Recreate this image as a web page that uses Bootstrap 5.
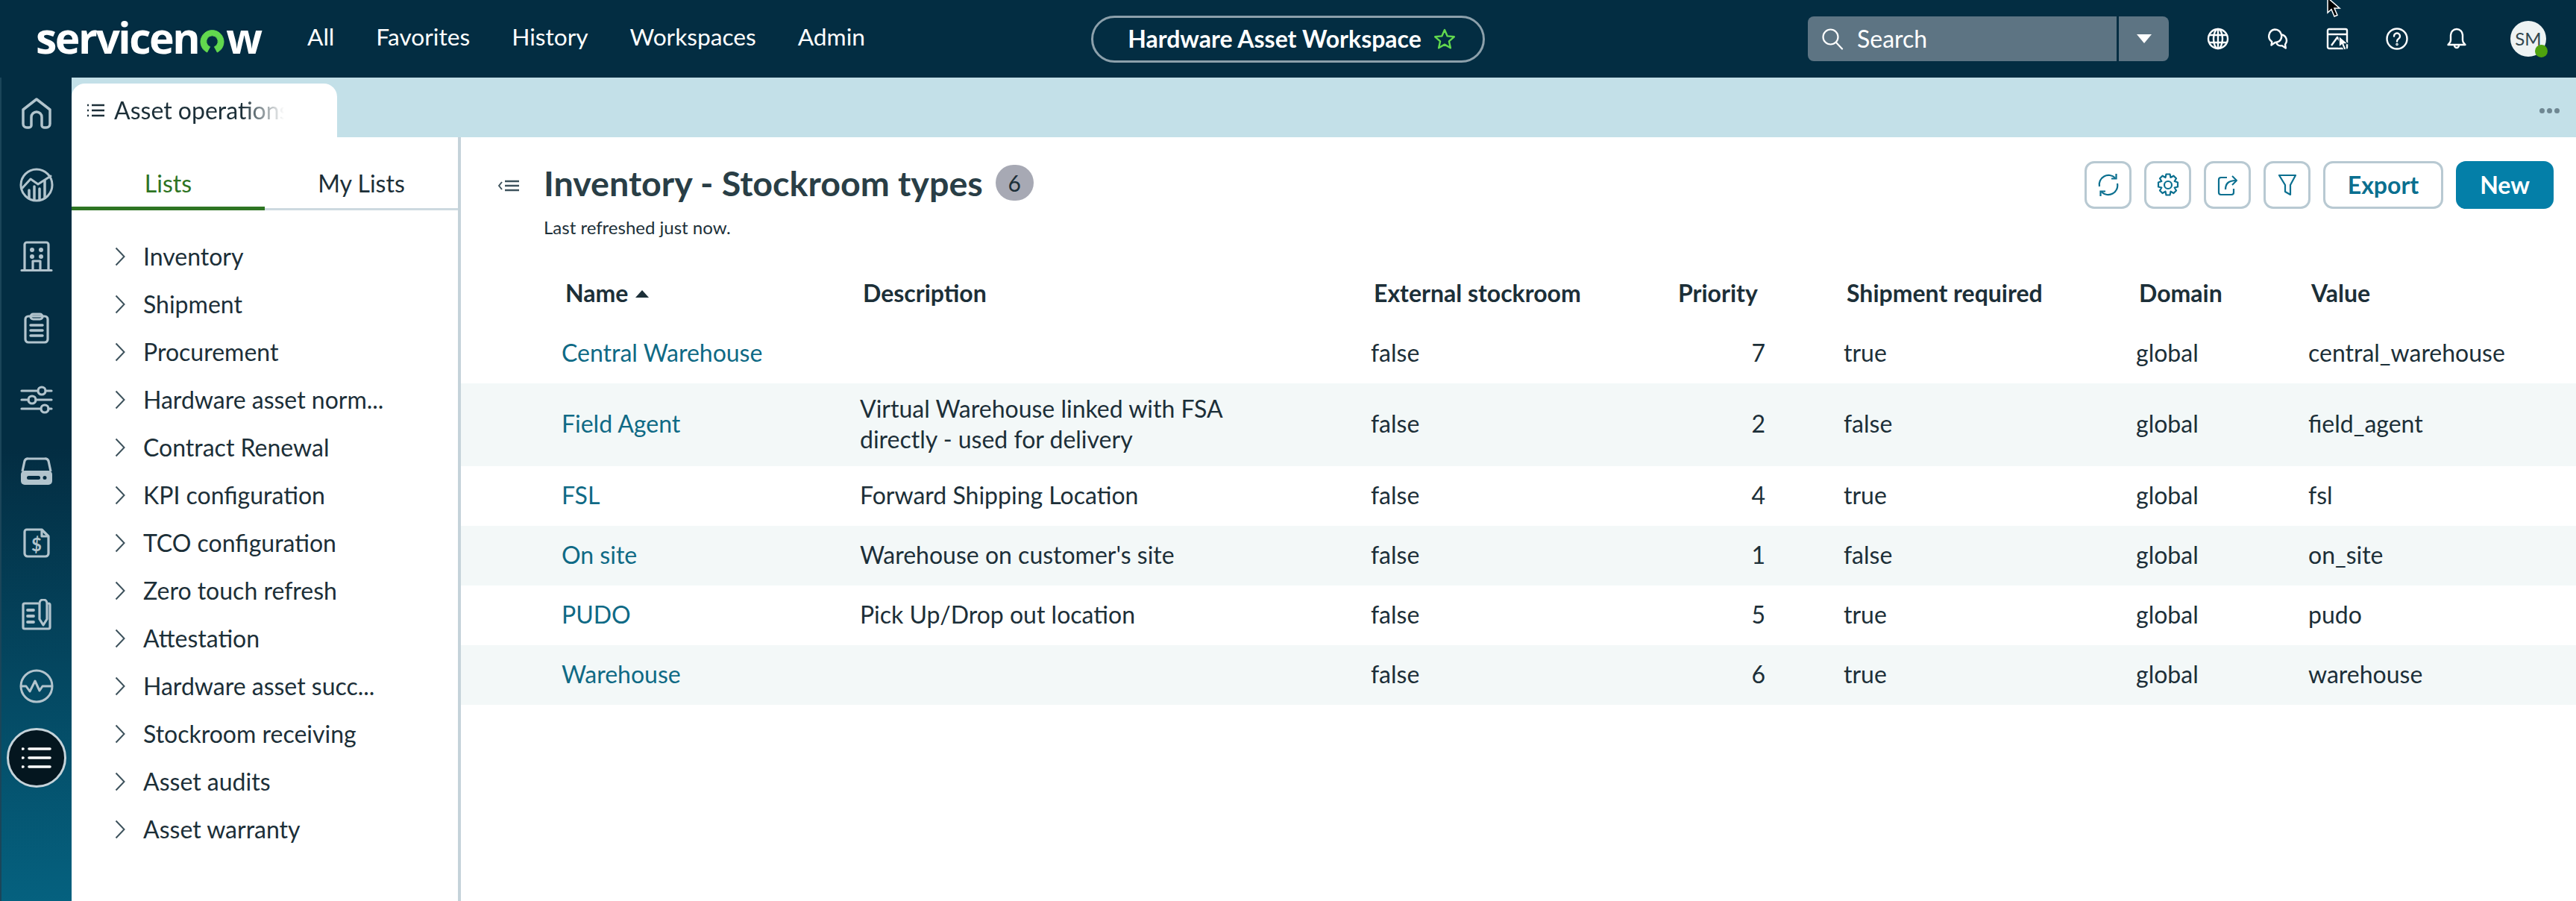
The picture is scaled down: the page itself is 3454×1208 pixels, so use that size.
<!DOCTYPE html>
<html lang="en">
<head>
  <meta charset="UTF-8" />
  <title>Inventory - Stockroom types</title>
  <link href="https://cdn.jsdelivr.net/npm/bootstrap@5.3.0/dist/css/bootstrap.min.css" rel="stylesheet" />
  <style>
    html, body { height: 100%; }
    body { font-family: "Lato", "Liberation Sans", sans-serif; font-size: 32px; color: #1c2f38; overflow: hidden; background: #fff; }
    svg { display: block; flex: none; }

    .sn-top { height: 104px; background: #032d42; padding: 0 44px; flex-wrap: nowrap; justify-content: flex-start; position: relative; }
    .sn-top-side { flex: 1 1 0; min-width: 0; }
    .sn-brand { font-family: "Open Sans", "Lato", sans-serif; font-weight: 700; font-size: 57px; line-height: 1; color: #fff; letter-spacing: -2.5px; width: 296px; margin: -4px 68px 0 4px; padding: 0; }
    .sn-brand svg { margin: 0 1px 0 1px; }
    .sn-menu { gap: 56px; margin-top: -4px; }
    .sn-menu .nav-link { color: #fff; padding: 0; font-size: 31.7px; }
    .sn-pill { width: 528px; height: 63px; border: 3px solid #8ca0ab; border-radius: 32px; color: #fff; font-weight: 700; font-size: 32px; gap: 16px; flex: none; padding-left: 10px; }
    .sn-search { width: 484px; height: 60px; background: #5d7483; border-radius: 8px; color: #fff; margin-right: 26px; }
    .sn-search-main { flex: 1; gap: 18px; padding-left: 18px; border-right: 3px solid #032d42; height: 100%; }
    .sn-search-caret { width: 67px; height: 100%; }
    .sn-caret { width: 0; height: 0; border-left: 10px solid transparent; border-right: 10px solid transparent; border-top: 12px solid #fff; }
    .sn-top-btn { width: 80px; }
    .sn-avatar { width: 48px; height: 48px; border-radius: 50%; background: #eef3f3; color: #32474f; font-size: 24px; margin: 0 -4px 0 32px; position: relative; flex: none; }
    .sn-avatar-dot { position: absolute; right: -2px; bottom: -1px; width: 17px; height: 17px; border-radius: 50%; background: #4fa30e; }
    .sn-cursor { position: absolute; left: 3118px; top: -3px; }
    .sn-cursor-small { position: absolute; left: 3134px; top: 46px; }

    .sn-rail { width: 96px; flex: none; background: linear-gradient(180deg, #032d42 45%, #05617f 100%); border-left: 2px solid #1b4559; }
    .sn-rail-slot { height: 96px; }
    .sn-rail-active { width: 80px; height: 80px; border-radius: 50%; background: #04161f; border: 3px solid #c5d3da; }

    .sn-strip { height: 80px; background: #c3e0e8; flex: none; }
    .sn-tab { width: 356px; height: 72px; margin-top: 8px; background: #fff; border-radius: 18px 18px 0 0; padding: 0 0 0 21px; gap: 12px; font-size: 32px; color: #1c2f38; }
    .sn-tab-text { width: 228px; overflow: hidden; white-space: nowrap; -webkit-mask-image: linear-gradient(90deg, #000 75%, transparent 100%); mask-image: linear-gradient(90deg, #000 75%, transparent 100%); }
    .sn-strip-dots { gap: 3px; padding: 8px 22px 0 0; }
    .sn-strip-dots span { width: 7px; height: 7px; border-radius: 50%; background: #6f8792; }

    .sn-left { width: 522px; flex: none; border-right: 4px solid #c5d3da; }
    .sn-tabs { border-bottom: 3px solid #cdd9e0; height: 98px; flex-wrap: nowrap; }
    .sn-tabs .nav-item { flex: 1 1 0; }
    .sn-tabs .nav-link { width: 100%; height: 98px; border: 0; border-radius: 0; padding: 43px 0 0; text-align: center; color: #1c2f38; background: none; margin: 0; font-size: 32px; line-height: 1.2; }
    .sn-tabs .nav-link.active { color: #2e7423; border-bottom: 5px solid #2e7423; margin-bottom: -3px; height: 98px; }
    .sn-tree { padding-top: 30px; }
    .sn-tree .list-group-item { height: 64px; border: 0; padding: 0 0 0 58px; gap: 24px; background: none; color: #1c2f38; font-size: 32px; }

    .sn-head { height: 170px; flex: none; padding: 32px 30px 0 50px; }
    .sn-title { font-size: 46.6px; font-weight: 700; color: #293e46; line-height: 58px; margin: 0 0 0 9px; }
    .sn-count { width: 51px; height: 48px; border-radius: 24px; background: #a7a9b4; color: #1c2f38; font-size: 30px; font-weight: 400; padding: 0; margin-left: 17px; }
    .sn-sub { font-size: 24px; line-height: 30px; margin: 16px 0 0 61px; }
    .sn-btns { gap: 17px; }
    .sn-btn { height: 64px; border: 3px solid #b8c9d2; border-radius: 13px; color: #0a6f8f; background: #fff; font-weight: 700; font-size: 32px; padding: 0; }
    .sn-btn-icon { width: 63px; }
    .sn-btn-export { width: 161px; }
    .sn-btn-new { width: 131px; background: #047fa8; border-color: #047fa8; color: #fff; }

    .sn-table { table-layout: fixed; width: 2836px; margin: 0; --bs-table-color: #1c2f38; --bs-table-border-color: transparent; --bs-table-bg: transparent; }
    .sn-table th { height: 80px; padding: 0 0 3px 30px; font-weight: 700; font-size: 32px; border: 0; vertical-align: middle; color: #1c2f38; }
    .sn-table td { height: 80px; padding: 12.5px 0 16.5px 26px; line-height: 41px; border: 0; vertical-align: middle; }
    .sn-table tbody tr:nth-child(even) td { background: #f3f8f8; }
    .sn-table td.sn-name-col { padding-left: 135px; }
    .sn-table th.sn-name-col { padding-left: 140px; }
    .sn-table th.sn-prio { padding-left: 26px; }
    .sn-table td.sn-num { text-align: right; padding-right: 79px; }
    .sn-table a { color: #0f6a85; text-decoration: none; }
    .sn-desc { max-width: 520px; }
    .sn-sort { display: inline-block; width: 0; height: 0; border-left: 9px solid transparent; border-right: 9px solid transparent; border-bottom: 10px solid #1c2f38; margin-left: 10px; vertical-align: 6px; }
  </style>
</head>
<body>
<div class="d-flex flex-column vh-100">

  <nav class="navbar sn-top align-items-center">
    <div class="sn-top-side d-flex align-items-center">
      <a class="navbar-brand sn-brand d-flex align-items-baseline" href="#">servicen<svg width="35" height="33" viewBox="0 0 36 34"><path d="M11 32A16 16 0 1 1 25 32L21 24.500A8 8 0 1 0 15 24.500Z" fill="#62d84e" stroke="#62d84e" stroke-linejoin="round"/></svg>w</a>
      <ul class="nav sn-menu">
        <li class="nav-item"><a class="nav-link" href="#">All</a></li>
        <li class="nav-item"><a class="nav-link" href="#">Favorites</a></li>
        <li class="nav-item"><a class="nav-link" href="#">History</a></li>
        <li class="nav-item"><a class="nav-link" href="#">Workspaces</a></li>
        <li class="nav-item"><a class="nav-link" href="#">Admin</a></li>
      </ul>
    </div>

    <div class="sn-pill d-flex align-items-center justify-content-center">
      <span>Hardware Asset Workspace</span>
      <svg width="30" height="28" viewBox="0 0 30 28" fill="none" stroke="#62d84e" stroke-width="2.4" stroke-linejoin="round"><path d="M15 2l3.7 8.4 9.1.9-6.9 6 2 9-7.9-4.7-7.9 4.7 2-9-6.9-6 9.1-.9z"/></svg>
    </div>

    <div class="sn-top-side d-flex align-items-center justify-content-end">
      <div class="sn-search d-flex align-items-center">
        <div class="sn-search-main d-flex align-items-center">
          <svg width="30" height="30" viewBox="0 0 30 30" fill="none" stroke="#fff" stroke-width="2.2" stroke-linecap="round"><circle cx="12.5" cy="12.5" r="10"/><path d="M20 20l8 8.5"/></svg>
          <span>Search</span>
        </div>
        <div class="sn-search-caret d-flex align-items-center justify-content-center"><span class="sn-caret"></span></div>
      </div>

      <div class="sn-top-btn d-flex justify-content-center">
        <svg width="30" height="30" viewBox="0 0 30 30" fill="none" stroke="#fff" stroke-width="2.4"><circle cx="15" cy="15" r="13"/><ellipse cx="15" cy="15" rx="6" ry="13"/><path d="M3 10h24M3 20h24M15 2v26"/></svg>
      </div>
      <div class="sn-top-btn d-flex justify-content-center">
        <svg width="30" height="30" viewBox="0 0 30 30" fill="none" stroke="#fff" stroke-width="2.4" stroke-linejoin="round"><path d="M11 2.5a9 9 0 0 1 6 15.8c-1.600 1.100-3.500 1.700-5.500 1.700l-5 3.500.8-4.600A9 9 0 0 1 11 2.500z"/><path d="M20.500 9.500a8 8 0 0 1 4.500 13l.8 5-5-3.200c-3 .4-6-.8-7.500-3.300"/></svg>
      </div>
      <div class="sn-top-btn d-flex justify-content-center">
        <svg width="30" height="30" viewBox="0 0 30 30" fill="none" stroke="#fff" stroke-width="2.4" stroke-linejoin="round"><rect x="2" y="2" width="26" height="26" rx="2"/><path d="M2 9h26M7 24l8-11 4 6"/></svg>
      </div>
      <div class="sn-top-btn d-flex justify-content-center">
        <svg width="30" height="30" viewBox="0 0 30 30" fill="none" stroke="#fff" stroke-width="2.4" stroke-linecap="round"><circle cx="15" cy="15" r="13.500"/><path d="M11 11.500a4 4 0 1 1 6 3.500c-1.400.9-2 1.600-2 3.500"/><circle cx="15" cy="22.500" r=".6"/></svg>
      </div>
      <div class="sn-top-btn d-flex justify-content-center">
        <svg width="30" height="30" viewBox="0 0 30 30" fill="none" stroke="#fff" stroke-width="2.4" stroke-linejoin="round"><path d="M15 2a8 8 0 0 1 8 8v7c0 3 2 4.500 3.500 6H3.500C5 21.500 7 20 7 17v-7a8 8 0 0 1 8-8z"/><path d="M12 24a3 3 0 0 0 6 0"/></svg>
      </div>
      <div class="sn-avatar d-flex align-items-center justify-content-center">SM<span class="sn-avatar-dot"></span></div>
    </div>

    <svg class="sn-cursor" width="24" height="28" viewBox="0 0 24 28"><path d="M3 0v20l5-4.500 4 9.500 4-1.700-4-9.300h7z" fill="#000" stroke="#fff" stroke-width="1.500"/></svg>
    <svg class="sn-cursor-small" width="18" height="24" viewBox="0 0 24 28"><path d="M3 1v20l5-4.500 4 9.500 4-1.700-4-9.300h7z" fill="#fff" stroke="#032d42" stroke-width="1.500"/></svg>
  </nav>

  <div class="d-flex flex-grow-1" style="min-height:0">
    <div class="sn-rail d-flex flex-column align-items-center">
      <div class="sn-rail-slot d-flex align-items-center justify-content-center">
        <svg width="42" height="42" viewBox="0 0 42 42" fill="none" stroke="#b2c4cd" stroke-width="3.500" stroke-linejoin="round"><path d="M3 16L21 2l18 14v19a5 5 0 0 1-5 5h-3a3 3 0 0 1-3-3V26a7 7 0 0 0-14 0v11a3 3 0 0 1-3 3H8a5 5 0 0 1-5-5z"/></svg>
      </div>
      <div class="sn-rail-slot d-flex align-items-center justify-content-center">
        <svg width="46" height="46" viewBox="0 0 46 46" fill="none" stroke="#b2c4cd" stroke-width="3" stroke-linecap="round" stroke-linejoin="round"><circle cx="23" cy="23" r="21"/><path d="M4 27L15 15l10 7L42 11"/><path d="M13 41V30M20 43V25M27 43V28M34 40V17" stroke-width="3.500"/></svg>
      </div>
      <div class="sn-rail-slot d-flex align-items-center justify-content-center">
        <svg width="44" height="42" viewBox="0 0 44 42" fill="none" stroke="#b2c4cd" stroke-width="3.200" stroke-linecap="round" stroke-linejoin="round"><path d="M6 39V5a3 3 0 0 1 3-3h26a3 3 0 0 1 3 3v34"/><path d="M2 39.500h40M17 39V27h10v12"/><g fill="#b2c4cd" stroke="none"><circle cx="16" cy="12" r="3"/><circle cx="28" cy="12" r="3"/><circle cx="16" cy="21" r="3"/><circle cx="28" cy="21" r="3"/></g></svg>
      </div>
      <div class="sn-rail-slot d-flex align-items-center justify-content-center">
        <svg width="34" height="42" viewBox="0 0 34 42" fill="none" stroke="#b2c4cd" stroke-width="3.200" stroke-linecap="round" stroke-linejoin="round"><rect x="2" y="5" width="30" height="35" rx="4"/><rect x="9" y="2" width="16" height="7" rx="3.500"/><path d="M9 17h16M9 24h16M9 31h16" stroke-width="3.500"/></svg>
      </div>
      <div class="sn-rail-slot d-flex align-items-center justify-content-center">
        <svg width="44" height="38" viewBox="0 0 44 38" fill="none" stroke="#b2c4cd" stroke-width="3.200" stroke-linecap="round"><path d="M2 7h21M35 7h7M2 19h9M21 19h21M2 31h25M38 31h4"/><circle cx="29" cy="7" r="5"/><circle cx="16" cy="19" r="5"/><circle cx="33" cy="31" r="5"/></svg>
      </div>
      <div class="sn-rail-slot d-flex align-items-center justify-content-center">
        <svg width="44" height="38" viewBox="0 0 44 38"><path d="M3 19L6 5a5 5 0 0 1 5-3h22a5 5 0 0 1 5 3l3 14" fill="none" stroke="#b2c4cd" stroke-width="3.200"/><rect x="1" y="18" width="42" height="19" rx="5" fill="#b2c4cd"/><rect x="9" y="25" width="18" height="5" rx="2.500" fill="#032d42"/><circle cx="33" cy="27.500" r="2.500" fill="#032d42"/></svg>
      </div>
      <div class="sn-rail-slot d-flex align-items-center justify-content-center">
        <svg width="36" height="40" viewBox="0 0 36 40" fill="none" stroke="#b2c4cd" stroke-width="3.200" stroke-linejoin="round"><path d="M5 2h20l9 9v23a4 4 0 0 1-4 4H6a4 4 0 0 1-4-4V5a3 3 0 0 1 3-3z"/><path d="M25 3v8h8"/><text x="18" y="31" text-anchor="middle" font-family="Lato, sans-serif" font-weight="700" font-size="24" fill="#b2c4cd" stroke="none">$</text></svg>
      </div>
      <div class="sn-rail-slot d-flex align-items-center justify-content-center">
        <svg width="40" height="42" viewBox="0 0 40 42" fill="none" stroke="#b2c4cd" stroke-width="3.200" stroke-linejoin="round" stroke-linecap="round"><path d="M22 6H4a2 2 0 0 0-2 2v30a2 2 0 0 0 2 2h32a2 2 0 0 0 2-2V8a2 2 0 0 0-2-2"/><path d="M24 6a5 5 0 0 1 10 0v21l-5 8-5-8z"/><path d="M8 15h8M8 23h8M8 31h8" stroke-width="3.800"/></svg>
      </div>
      <div class="sn-rail-slot d-flex align-items-center justify-content-center">
        <svg width="46" height="46" viewBox="0 0 46 46" fill="none" stroke="#b2c4cd" stroke-width="3" stroke-linecap="round" stroke-linejoin="round"><circle cx="23" cy="23" r="21"/><path d="M3 23h6l5 7 7-14 6 13 4-6h12"/></svg>
      </div>
      <div class="sn-rail-slot d-flex align-items-center justify-content-center">
        <div class="sn-rail-active d-flex align-items-center justify-content-center">
          <svg width="40" height="30" viewBox="0 0 40 30" fill="none" stroke="#fff" stroke-width="3.600" stroke-linecap="round"><path d="M10 3h28M10 15h28M10 27h28M1.500 3h.5M1.500 15h.5M1.500 27h.5"/></svg>
        </div>
      </div>
    </div>

    <div class="flex-grow-1 d-flex flex-column" style="min-width:0">
      <div class="sn-strip d-flex justify-content-between">
        <div class="sn-tab d-flex align-items-center">
          <svg width="24" height="20" viewBox="0 0 24 20" fill="none" stroke="#1c2f38" stroke-width="2.400"><path d="M6 3h17M6 10h17M6 17h17M0 3h2M0 10h2M0 17h2"/></svg>
          <span class="sn-tab-text">Asset operations</span>
        </div>
        <div class="sn-strip-dots d-flex align-items-center"><span></span><span></span><span></span></div>
      </div>

      <div class="d-flex flex-grow-1" style="min-height:0">
        <div class="sn-left">
          <ul class="nav sn-tabs">
            <li class="nav-item"><a class="nav-link active" href="#">Lists</a></li>
            <li class="nav-item"><a class="nav-link" href="#">My Lists</a></li>
          </ul>
          <div class="list-group list-group-flush sn-tree">
            <a href="#" class="list-group-item d-flex align-items-center"><svg width="14" height="26" viewBox="0 0 14 26" fill="none" stroke="#3d525c" stroke-width="2"><path d="M1.500 1.500L12.500 13 1.500 24.500"/></svg>Inventory</a>
            <a href="#" class="list-group-item d-flex align-items-center"><svg width="14" height="26" viewBox="0 0 14 26" fill="none" stroke="#3d525c" stroke-width="2"><path d="M1.500 1.500L12.500 13 1.500 24.500"/></svg>Shipment</a>
            <a href="#" class="list-group-item d-flex align-items-center"><svg width="14" height="26" viewBox="0 0 14 26" fill="none" stroke="#3d525c" stroke-width="2"><path d="M1.500 1.500L12.500 13 1.500 24.500"/></svg>Procurement</a>
            <a href="#" class="list-group-item d-flex align-items-center"><svg width="14" height="26" viewBox="0 0 14 26" fill="none" stroke="#3d525c" stroke-width="2"><path d="M1.500 1.500L12.500 13 1.500 24.500"/></svg>Hardware asset norm...</a>
            <a href="#" class="list-group-item d-flex align-items-center"><svg width="14" height="26" viewBox="0 0 14 26" fill="none" stroke="#3d525c" stroke-width="2"><path d="M1.500 1.500L12.500 13 1.500 24.500"/></svg>Contract Renewal</a>
            <a href="#" class="list-group-item d-flex align-items-center"><svg width="14" height="26" viewBox="0 0 14 26" fill="none" stroke="#3d525c" stroke-width="2"><path d="M1.500 1.500L12.500 13 1.500 24.500"/></svg>KPI configuration</a>
            <a href="#" class="list-group-item d-flex align-items-center"><svg width="14" height="26" viewBox="0 0 14 26" fill="none" stroke="#3d525c" stroke-width="2"><path d="M1.500 1.500L12.500 13 1.500 24.500"/></svg>TCO configuration</a>
            <a href="#" class="list-group-item d-flex align-items-center"><svg width="14" height="26" viewBox="0 0 14 26" fill="none" stroke="#3d525c" stroke-width="2"><path d="M1.500 1.500L12.500 13 1.500 24.500"/></svg>Zero touch refresh</a>
            <a href="#" class="list-group-item d-flex align-items-center"><svg width="14" height="26" viewBox="0 0 14 26" fill="none" stroke="#3d525c" stroke-width="2"><path d="M1.500 1.500L12.500 13 1.500 24.500"/></svg>Attestation</a>
            <a href="#" class="list-group-item d-flex align-items-center"><svg width="14" height="26" viewBox="0 0 14 26" fill="none" stroke="#3d525c" stroke-width="2"><path d="M1.500 1.500L12.500 13 1.500 24.500"/></svg>Hardware asset succ...</a>
            <a href="#" class="list-group-item d-flex align-items-center"><svg width="14" height="26" viewBox="0 0 14 26" fill="none" stroke="#3d525c" stroke-width="2"><path d="M1.500 1.500L12.500 13 1.500 24.500"/></svg>Stockroom receiving</a>
            <a href="#" class="list-group-item d-flex align-items-center"><svg width="14" height="26" viewBox="0 0 14 26" fill="none" stroke="#3d525c" stroke-width="2"><path d="M1.500 1.500L12.500 13 1.500 24.500"/></svg>Asset audits</a>
            <a href="#" class="list-group-item d-flex align-items-center"><svg width="14" height="26" viewBox="0 0 14 26" fill="none" stroke="#3d525c" stroke-width="2"><path d="M1.500 1.500L12.500 13 1.500 24.500"/></svg>Asset warranty</a>
          </div>
        </div>

        <div class="flex-grow-1" style="min-width:0">
          <div class="sn-head d-flex justify-content-between align-items-start">
            <div>
              <div class="d-flex align-items-center">
                <svg width="28" height="16" viewBox="0 0 28 16" fill="none" stroke="#3d525c" stroke-width="2.400" class="me-4 mt-2"><path d="M9 2h19M9 8h19M9 14h19"/><path d="M5 3L1 8l4 5" stroke-width="2"/></svg>
                <h1 class="sn-title">Inventory - Stockroom types</h1>
                <span class="badge sn-count d-flex align-items-center justify-content-center">6</span>
              </div>
              <p class="sn-sub">Last refreshed just now.</p>
            </div>
            <div class="sn-btns d-flex">
              <button class="btn sn-btn sn-btn-icon d-flex align-items-center justify-content-center">
                <svg width="30" height="32" viewBox="0 0 30 32" fill="none" stroke="#0a6f8f" stroke-width="2.200"><path d="M3 18A12.500 12.500 0 0 1 24 6.500"/><path d="M27 14A12.500 12.500 0 0 1 6 25.500"/><path d="M25.500 1v6.500H19M4.500 31v-6.500H11"/></svg>
              </button>
              <button class="btn sn-btn sn-btn-icon d-flex align-items-center justify-content-center">
                <svg width="30" height="32" viewBox="0 0 30 32" fill="none" stroke="#0a6f8f" stroke-width="2.200" stroke-linejoin="round"><circle cx="15" cy="16" r="5"/><path d="M12.500 1.500h5l1 4.500 4-2.300 3.500 3.500-2.300 3.800 4.300 1.500v6l-4.300 1 2.300 4-3.500 3.500-4-2.300-1 4.800h-5l-1-4.800-4 2.300L4 23.500l2.300-4-4.300-1v-6l4.300-1.500L4 7.200l3.500-3.500 4 2.300z"/></svg>
              </button>
              <button class="btn sn-btn sn-btn-icon d-flex align-items-center justify-content-center">
                <svg width="28" height="30" viewBox="0 0 28 30" fill="none" stroke="#0a6f8f" stroke-width="2.200" stroke-linejoin="round"><path d="M13 5H5a3 3 0 0 0-3 3v17a3 3 0 0 0 3 3h14a3 3 0 0 0 3-3v-5"/><path d="M11 21c0-7 3-12 14-12"/><path d="M20 3l6 6-6 6" stroke-width="2"/></svg>
              </button>
              <button class="btn sn-btn sn-btn-icon d-flex align-items-center justify-content-center">
                <svg width="26" height="30" viewBox="0 0 26 30" fill="none" stroke="#0a6f8f" stroke-width="2.200" stroke-linejoin="round"><path d="M2 2h22l-7 13v13l-7-4v-9z"/></svg>
              </button>
              <button class="btn sn-btn sn-btn-export">Export</button>
              <button class="btn sn-btn sn-btn-new">New</button>
            </div>
          </div>

          <table class="table sn-table">
            <colgroup>
              <col style="width:509px"><col style="width:685px"><col style="width:412px"><col style="width:222px"><col style="width:392px"><col style="width:231px"><col style="width:385px">
            </colgroup>
            <thead>
              <tr>
                <th class="sn-name-col">Name<span class="sn-sort"></span></th>
                <th>Description</th>
                <th>External stockroom</th>
                <th class="sn-prio">Priority</th>
                <th>Shipment required</th>
                <th>Domain</th>
                <th>Value</th>
              </tr>
            </thead>
            <tbody>
              <tr><td class="sn-name-col"><a href="#">Central Warehouse</a></td><td></td><td>false</td><td class="sn-num">7</td><td>true</td><td>global</td><td>central_warehouse</td></tr>
              <tr><td class="sn-name-col"><a href="#">Field Agent</a></td><td><div class="sn-desc">Virtual Warehouse linked with FSA directly - used for delivery</div></td><td>false</td><td class="sn-num">2</td><td>false</td><td>global</td><td>field_agent</td></tr>
              <tr><td class="sn-name-col"><a href="#">FSL</a></td><td>Forward Shipping Location</td><td>false</td><td class="sn-num">4</td><td>true</td><td>global</td><td>fsl</td></tr>
              <tr><td class="sn-name-col"><a href="#">On site</a></td><td>Warehouse on customer's site</td><td>false</td><td class="sn-num">1</td><td>false</td><td>global</td><td>on_site</td></tr>
              <tr><td class="sn-name-col"><a href="#">PUDO</a></td><td>Pick Up/Drop out location</td><td>false</td><td class="sn-num">5</td><td>true</td><td>global</td><td>pudo</td></tr>
              <tr><td class="sn-name-col"><a href="#">Warehouse</a></td><td></td><td>false</td><td class="sn-num">6</td><td>true</td><td>global</td><td>warehouse</td></tr>
            </tbody>
          </table>
        </div>
      </div>
    </div>
  </div>
</div>
<script src="https://cdn.jsdelivr.net/npm/bootstrap@5.3.0/dist/js/bootstrap.bundle.min.js"></script>
</body>
</html>
